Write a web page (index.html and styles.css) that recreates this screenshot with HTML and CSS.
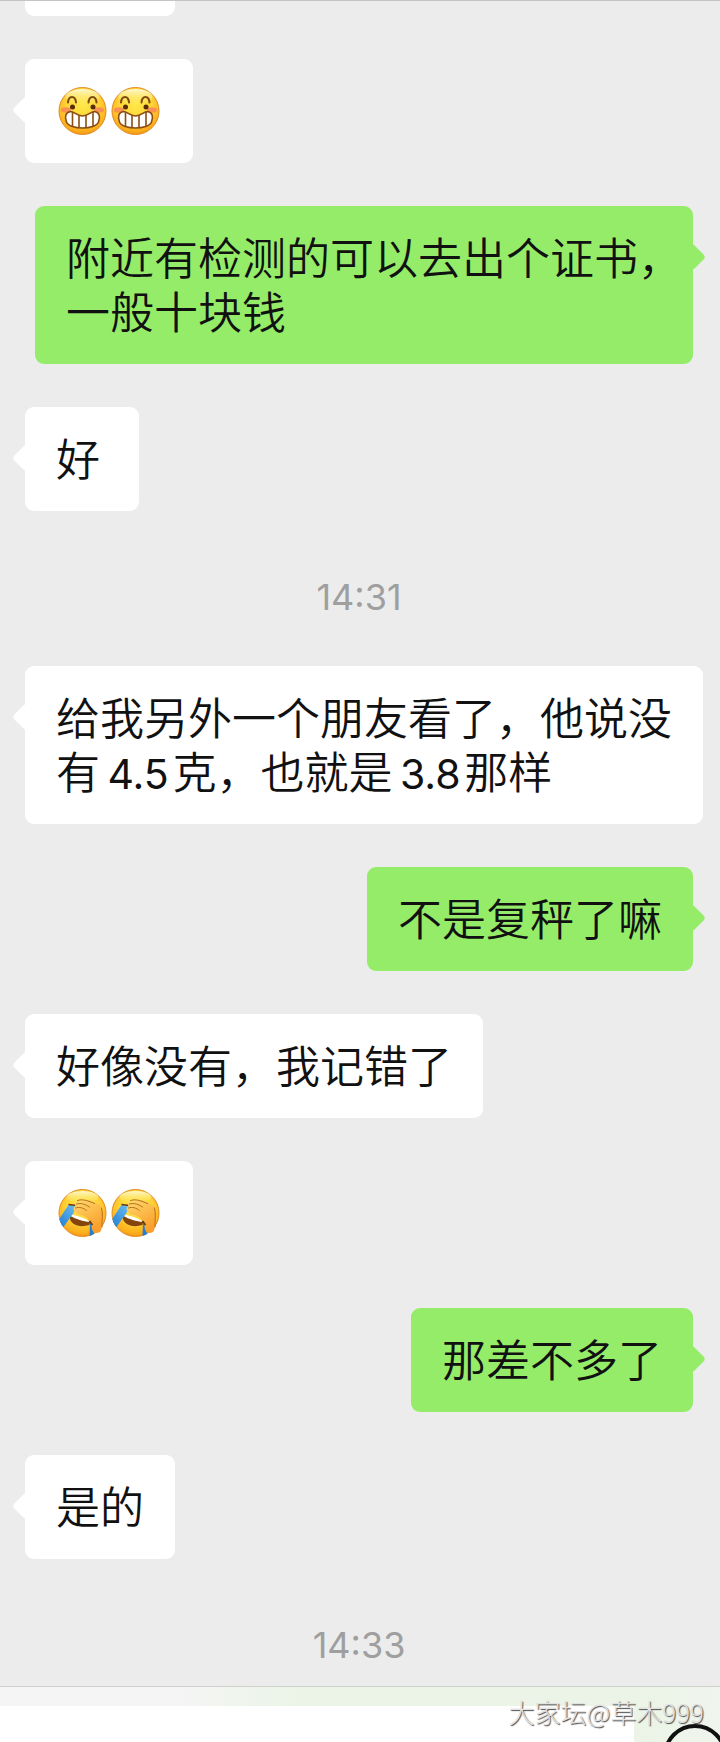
FILE: index.html
```html
<!DOCTYPE html>
<html lang="zh-CN">

<head>
	<meta charset="UTF-8">
	<meta name="viewport" content="width=device-width, initial-scale=1.0">
	<link rel="stylesheet" href="styles.css">
	<title>聊天</title>
</head>

<body>
	<!-- shared emoji drawings -->
	<svg class="defs" width="0" height="0" aria-hidden="true">
		<defs>
			<radialGradient id="face" cx="50%" cy="35%" r="68%">
				<stop offset="0" stop-color="#ffe94a" />
				<stop offset="0.5" stop-color="#fed437" />
				<stop offset="0.85" stop-color="#fbae1c" />
				<stop offset="1" stop-color="#f08c16" />
			</radialGradient>
			<linearGradient id="shine" x1="0" y1="0" x2="0" y2="1">
				<stop offset="0" stop-color="#fffbe0" stop-opacity="0.9" />
				<stop offset="1" stop-color="#fff27a" stop-opacity="0" />
			</linearGradient>
			<linearGradient id="hand" x1="0" y1="0" x2="0.5" y2="1">
				<stop offset="0" stop-color="#fedb70" />
				<stop offset="1" stop-color="#fa9f2b" />
			</linearGradient>
			<linearGradient id="tear" x1="1" y1="0" x2="0" y2="1">
				<stop offset="0" stop-color="#6cc0f2" />
				<stop offset="1" stop-color="#1e78d2" />
			</linearGradient>
			<clipPath id="round">
				<circle cx="24" cy="24" r="24" />
			</clipPath>
			<clipPath id="teeth">
				<path d="M12 24.500C7 25 6 30 8 35C11 43 37 43 40 35C42 30 41 25 36 24.500C32 24.500 30 29 24 29C18 29 16 24.500 12 24.500Z" />
			</clipPath>
			<symbol id="grin" viewBox="0 0 48 48">
				<circle cx="24" cy="24" r="23.500" fill="url(#face)" stroke="#e08a20" />
				<ellipse cx="24" cy="10" rx="17" ry="8" fill="url(#shine)" />
				<g fill="#f9875a" opacity="0.85">
					<ellipse cx="7.500" cy="23" rx="5" ry="2.800" />
					<ellipse cx="40.500" cy="23" rx="5" ry="2.800" />
				</g>
				<path d="M9.500 15.500C10 8 17 8 17.500 15.500M30 15.500C30.500 8 37.500 8 38 15.500" fill="none" stroke="#7d4a10" stroke-width="2" stroke-linecap="round" />
				<circle cx="14" cy="20" r="2.500" fill="#5a2b08" />
				<circle cx="34.500" cy="20" r="2.500" fill="#5a2b08" />
				<g clip-path="url(#teeth)">
					<path d="M5 22h38v22H5z" fill="#fff" />
					<path d="M14 22V44M20.500 26V44M27.500 26V44M34.500 22V44" stroke="#8a4d12" stroke-width="1.600" />
				</g>
				<path d="M12 24.500C7 25 6 30 8 35C11 43 37 43 40 35C42 30 41 25 36 24.500C32 24.500 30 29 24 29C18 29 16 24.500 12 24.500Z" fill="none" stroke="#8a4d12" stroke-width="1.600" />
			</symbol>
			<symbol id="facepalm" viewBox="0 0 48 48">
				<circle cx="24" cy="24" r="23.500" fill="url(#face)" stroke="#e08a20" />
				<ellipse cx="24" cy="8" rx="16" ry="6" fill="url(#shine)" />
				<path d="M11 28C12 36 21 39 31 36L32 32C25 32 17 28 12 26Z" fill="#84450c" />
				<path d="M13 25.500C19 27 27 29 31.500 33C25 32.500 17 30 12 27Z" fill="#fff" />
				<g clip-path="url(#round)">
					<path d="M10 16L18 17L15 24L5 38L-2 34Z" fill="url(#tear)" />
					<path d="M31.500 34L34 36L36 47H31Z" fill="#267fd0" />
				</g>
				<path d="M10 15.500L18 16.500" stroke="#6b330a" stroke-width="1.500" />
				<path d="M17 17C15 14 19 10 24 10.500C31 10 37 13 41 16C46 21 44 29 43 35C44 41 42 44 38 44C34 44 33 40 33 36C31 31 29 28 24 26.500C21 26 18 25.500 17 23C14 21 15 18 17 17Z" fill="url(#hand)" />
				<path d="M19 11.500C24 9.500 30 12 36 14.500M18 15C23 13.500 27 15.500 31 18M17 19C21 17.500 25 19 28 21.500M43 19C45 26 43 31 43.500 38" fill="none" stroke="#b86f1a" stroke-width="1" stroke-linecap="round" />
				<path d="M31 32L34 36" stroke="#5e3411" stroke-width="1.500" />
			</symbol>
		</defs>
	</svg>

	<main class="chat">
		<div class="message previous"></div>
		<div class="message received">
			<svg class="emoji" role="img" aria-label="呲牙"><use href="#grin" /></svg>
			<svg class="emoji" role="img" aria-label="呲牙"><use href="#grin" /></svg>
		</div>
		<div class="message sent">
			<p class="lines">附近有检测的可以去出个证书，<br>一般十块钱</p>
		</div>
		<div class="message received">好</div>
		<time class="time">14:31</time>
		<div class="message received">
			<p class="lines">给我另外一个朋友看了，他说没<br>有<span class="number">&thinsp;4.5&hairsp;</span>克，也就是<span class="number">&thinsp;3.8&hairsp;</span>那样</p>
		</div>
		<div class="message sent">不是复秤了嘛</div>
		<div class="message received">好像没有，我记错了</div>
		<div class="message received">
			<svg class="emoji" role="img" aria-label="捂脸"><use href="#facepalm" /></svg>
			<svg class="emoji" role="img" aria-label="捂脸"><use href="#facepalm" /></svg>
		</div>
		<div class="message sent">那差不多了</div>
		<div class="message received">是的</div>
		<time class="time last">14:33</time>
	</main>

	<footer class="composer">
		<input class="field" type="text" aria-label="输入消息">
		<button class="emoji-button" type="button" aria-label="表情">
			<svg width="64" height="64" viewBox="0 0 64 64">
				<circle cx="32" cy="32" r="30" fill="none" stroke="#111" stroke-width="4" />
			</svg>
		</button>
		<div class="watermark">大家坛@草木999</div>
	</footer>
</body>

</html>
```

FILE: styles.css
```css
* {
	box-sizing: border-box;
}

body {
	display: flex;
	flex-direction: column;
	min-height: 100vh;
	margin: 0;
	background-color: #ececec;
	color: #111;
	font-family: Inter, "Noto Sans CJK SC", sans-serif;
}

.defs {
	position: absolute;
}

.chat {
	display: flex;
	flex: 1;
	flex-direction: column;
	align-items: flex-start;
	gap: 43px;
	padding: 0 17px 0 25px;
	border-top: 1px solid #c4c4c4;
}

.message {
	position: relative;
	display: flex;
	min-width: 114px;
	padding: 26px 31px 24px;
	border-radius: 9px;
	background-color: #fff;
	font-size: 44px;
	font-weight: 350;
	line-height: 54px;
}

/* little arrow on the side of the bubble */
.message::before {
	content: "";
	position: absolute;
	top: 41px;
	left: -9px;
	width: 20px;
	height: 20px;
	border-radius: 4px;
	background-color: inherit;
	transform: rotate(45deg);
}

.sent {
	align-self: flex-end;
	max-width: calc(100% - 20px);
	margin: 0 10px;
	background-color: #95ec69;
}

.sent::before {
	left: auto;
	right: -9px;
}

/* the blank half of a closing comma may hang into the padding */
.lines {
	margin: 0;
	white-space: nowrap;
}

.number {
	font-size: 41px;
	font-weight: 400;
	line-height: 1;
}

/* bottom edge of the message scrolled out of view */
.previous {
	width: 150px;
	height: 15px;
	padding: 0;
	border-radius: 0 0 9px 9px;
}

.previous::before {
	display: none;
}

.emoji {
	width: 53px;
	height: 48px;
	margin: 2px 0 4px;
}

.time {
	align-self: center;
	margin: 22px 10px 4px 0;
	color: #9f9f9f;
	font-size: 36px;
	line-height: 43px;
}

.last {
	margin-bottom: 19px;
}

.composer {
	position: relative;
	display: flex;
	flex: none;
	height: 56px;
	padding-top: 19px;
	overflow: hidden;
	border-top: 1px solid #cfd1ce;
	background: linear-gradient(to right, #f5f5f5 24%, #ebf4e6 42%, #ebf4e6 88%, #f0f5ed);
}

.field {
	flex: 1;
	min-width: 0;
	height: 36px;
	padding: 0 24px;
	border: 0;
	border-radius: 0;
	background-color: #fff;
	font-size: 26px;
}

.emoji-button {
	display: flex;
	align-items: flex-start;
	width: 86px;
	height: 36px;
	padding: 18px 0 0 29px;
	overflow: hidden;
	border: 0;
	background: none;
}

.emoji-button svg {
	flex: none;
}

.watermark {
	position: absolute;
	right: 16px;
	bottom: 11px;
	color: #e2e2e2;
	font-family: "Noto Sans CJK SC", sans-serif;
	font-size: 26px;
	font-weight: 300;
	line-height: 38px;
	text-shadow: 1px 1px 1px #444;
}
```
